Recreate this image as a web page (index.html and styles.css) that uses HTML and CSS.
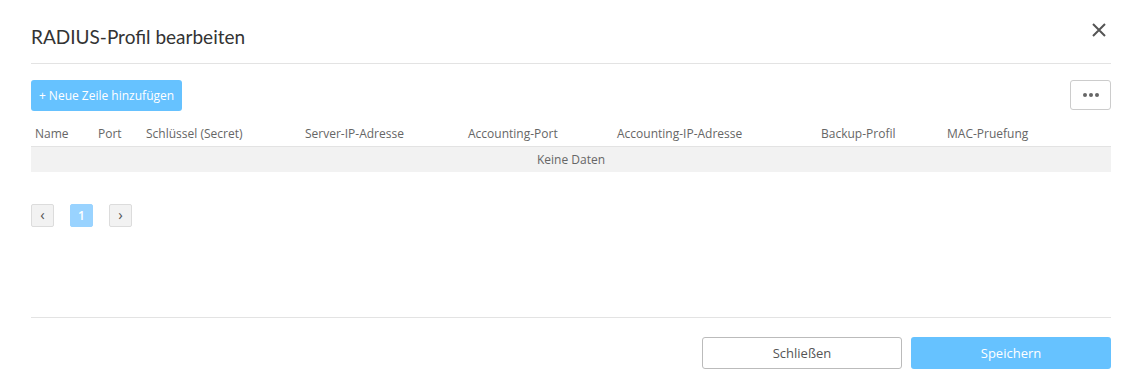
FILE: index.html
```html
<!DOCTYPE html>
<html lang="de">
<head>
  <meta charset="UTF-8">
  <meta name="viewport" content="width=device-width, initial-scale=1.0">
  <title>RADIUS-Profil bearbeiten</title>
  <link rel="stylesheet" href="styles.css">
</head>
<body>
  <div class="modal">
    <div class="modal-header">
      <h2 class="modal-title">RADIUS-Profil bearbeiten</h2>
      <button class="close-btn" aria-label="Schließen">
        <svg width="14" height="14" viewBox="0 0 14 14"><path d="M1 1L13 13M13 1L1 13" stroke="#555" stroke-width="2" fill="none"/></svg>
      </button>
    </div>

    <div class="modal-body">
      <div class="toolbar">
        <button class="btn-add">+ Neue Zeile hinzufügen</button>
        <button class="btn-more"><span></span><span></span><span></span></button>
      </div>

      <table class="grid">
        <colgroup>
          <col style="width:63px"><col style="width:48px"><col style="width:159px"><col style="width:163px">
          <col style="width:149px"><col style="width:204px"><col style="width:126px"><col>
        </colgroup>
        <thead>
          <tr>
            <th>Name</th>
            <th>Port</th>
            <th>Schlüssel (Secret)</th>
            <th>Server-IP-Adresse</th>
            <th>Accounting-Port</th>
            <th>Accounting-IP-Adresse</th>
            <th>Backup-Profil</th>
            <th>MAC-Pruefung</th>
          </tr>
        </thead>
        <tbody>
          <tr class="empty"><td colspan="8">Keine Daten</td></tr>
        </tbody>
      </table>

      <div class="pager">
        <button class="pg">&lsaquo;</button>
        <button class="pg active">1</button>
        <button class="pg">&rsaquo;</button>
      </div>
    </div>

    <div class="modal-footer">
      <button class="btn-close">Schließen</button>
      <button class="btn-save">Speichern</button>
    </div>
  </div>
</body>
</html>
```

FILE: styles.css
```css
body { margin: 0; font-family: "Open Sans", Arial, sans-serif; background: #fff; color: #555; }
.modal { width: 1080px; padding: 0 31px; }
button { font-family: inherit; cursor: pointer; }

.modal-header { display: flex; align-items: center; justify-content: space-between; height: 63px; border-bottom: 1px solid #e3e3e3; }
.modal-title { margin: 0; padding-top: 9px; font-family: Lato, "Open Sans", sans-serif; font-size: 19px; font-weight: 400; color: #333; }
.close-btn { border: none; background: none; padding: 0; margin: 0 5px 0 0; width: 14px; height: 14px; margin-top: -3px; }
.close-btn svg { display: block; }

.modal-body { height: 253px; }
.toolbar { display: flex; justify-content: space-between; align-items: flex-start; padding-top: 16px; }
.btn-add { height: 31px; width: 151px; border: none; border-radius: 3px; background: #66c2ff; color: #fff; font-size: 12px; padding: 0; }
.btn-more { height: 30px; width: 41px; border: 1px solid #ccc; border-radius: 3px; background: #fff; display: flex; justify-content: center; align-items: center; gap: 2px; padding: 0; }
.btn-more span { width: 4px; height: 4px; border-radius: 50%; background: #666; }

.grid { width: 100%; border-collapse: collapse; table-layout: fixed; margin-top: 4px; font-size: 12px; }
.grid th { font-weight: 400; color: #666; text-align: left; padding: 6px 4px 0; height: 25px; border-bottom: 1px solid #e3e3e3; white-space: nowrap; }
.grid td { padding: 0; }
.empty td { background: #f2f2f2; text-align: center; height: 25px; color: #666; }

.pager { display: flex; gap: 16px; margin-top: 32px; }
.pg { width: 23px; height: 23px; border: 1px solid #dcdcdc; border-radius: 2px; background: #f2f2f2; color: #555; font-size: 15px; line-height: 1; padding: 0 0 2px; }
.pg.active { background: #99d3ff; border-color: #99d3ff; color: #fff; font-size: 12px; font-weight: 600; padding: 0; }

.modal-footer { display: flex; justify-content: flex-end; gap: 9px; border-top: 1px solid #e3e3e3; padding-top: 19px; }
.btn-close { width: 200px; height: 32px; border: 1px solid #bbb; border-radius: 3px; background: #fff; color: #555; font-size: 13px; }
.btn-save { width: 200px; height: 32px; border: none; border-radius: 3px; background: #66c2ff; color: #fff; font-size: 13px; }
```
